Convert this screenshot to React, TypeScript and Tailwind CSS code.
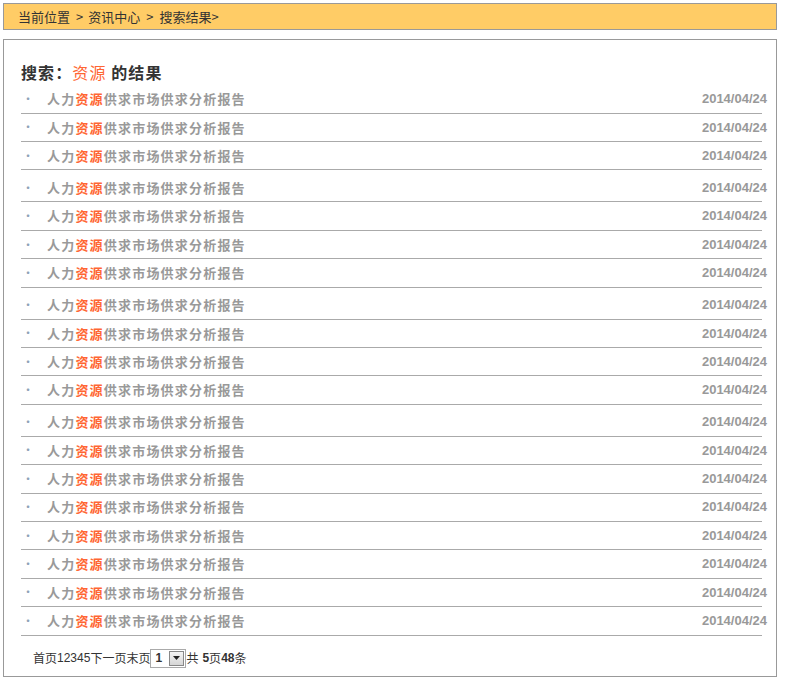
import React from 'react';

const groups = [3, 4, 4, 8];

function ResultRow() {
  return (
    <li className="flex h-[28.4px] items-center border-b border-[#aaa] text-[13px]">
      <span className="w-[26px] pl-[1px] text-[12px] text-[#8fa3b8]">·</span>
      <span className="flex-1 font-bold tracking-[1.2px] text-[#999]">
        人力<span className="text-[#ff6633]">资源</span>供求市场供求分析报告
      </span>
      <span className="-mr-[5px] font-['Liberation_Sans',Arial,sans-serif] text-[13px] font-bold text-[#999]">
        2014/04/24
      </span>
    </li>
  );
}

export default function App() {
  return (
    <div className="p-[3px] font-['Noto_Sans_CJK_SC','Liberation_Sans',sans-serif] text-[#333]">
      <div className="w-[774px]">
        <div className="flex h-[27px] items-center border border-[#999] bg-[#ffcc66] pl-[14px] text-[13px] text-[#333]">
          <span>当前位置</span>
          <span className="ml-[6px] mr-[5px]">&gt;</span>
          <span>资讯中心</span>
          <span className="ml-[6px] mr-[6px]">&gt;</span>
          <span>搜索结果&gt;</span>
        </div>

        <div className="mt-[9px] h-[638px] border border-[#999] bg-white">
          <h2 className="mb-[3.3px] ml-[17px] pt-[22px] text-[16px] leading-[20px] font-bold tracking-[1.1px] text-[#333]">
            搜索：<span className="font-normal text-[#ff6633]">资源</span> 的结果
          </h2>

          <div className="ml-[17px] mr-[14px]">
            {groups.map((count, g) => (
              <ul key={g} className={g > 0 ? 'mt-[3.6px]' : ''}>
                {Array.from({ length: count }).map((_, i) => (
                  <ResultRow key={i} />
                ))}
              </ul>
            ))}
          </div>

          <div className="mt-[13px] flex items-center pl-[29px] text-[12px] text-[#333]">
            <span>首页</span>
            <span className="font-['Liberation_Sans',Arial,sans-serif]">12345</span>
            <span>下一页末页</span>
            <span className="flex h-[19px] w-[36px] items-center border border-[#aaa] bg-white">
              <span className="flex-1 pl-[4px] font-['Liberation_Sans',Arial,sans-serif] text-[12px] font-bold">
                1
              </span>
              <span className="mr-[1px] flex h-[15px] w-[15px] items-center justify-center border border-[#888] bg-gradient-to-b from-[#f4f4f4] to-[#d6d6d6]">
                <svg width="7" height="4" viewBox="0 0 7 4">
                  <path d="M0 0h7L3.5 4z" fill="#222" />
                </svg>
              </span>
            </span>
            <span>共 </span>
            <span className="ml-[4px] font-['Liberation_Sans',Arial,sans-serif] font-bold">5</span>
            <span>页</span>
            <span className="font-['Liberation_Sans',Arial,sans-serif] font-bold">48</span>
            <span>条</span>
          </div>
        </div>
      </div>
    </div>
  );
}
